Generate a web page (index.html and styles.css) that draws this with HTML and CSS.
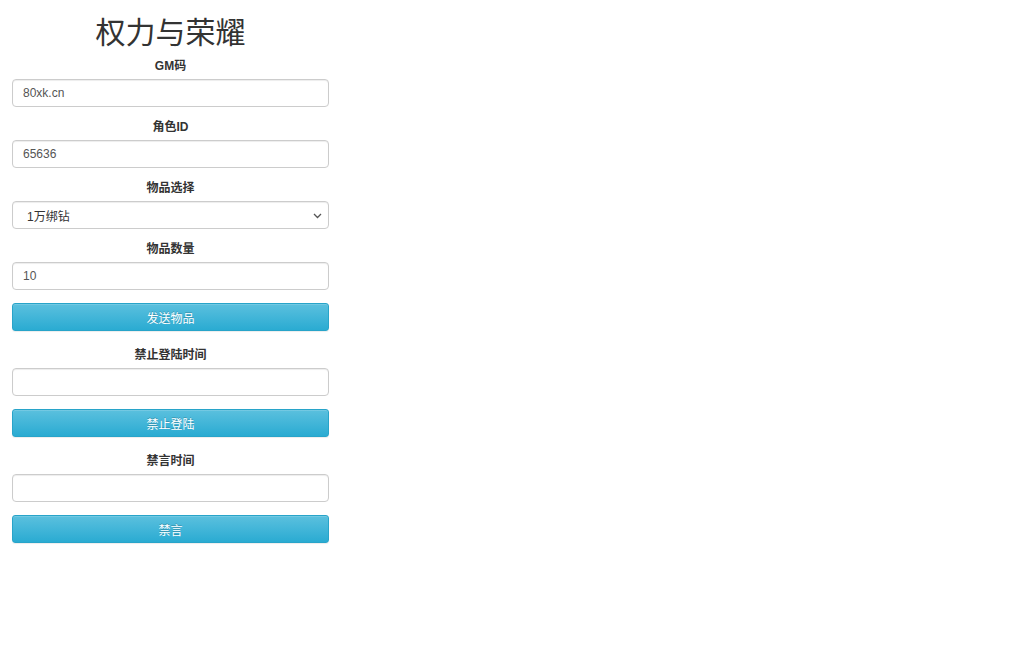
FILE: index.html
```html
<!DOCTYPE html>
<html lang="zh-CN">
<head>
<meta charset="utf-8">
<title>权力与荣耀</title>
<link rel="stylesheet" href="styles.css">
</head>
<body>
<main class="panel">
  <h1 class="title">权力与荣耀</h1>
  <div class="field">
    <label class="label">GM码</label>
    <input class="control" type="text" value="80xk.cn">
  </div>
  <div class="field">
    <label class="label">角色ID</label>
    <input class="control" type="text" value="65636">
  </div>
  <div class="field">
    <label class="label">物品选择</label>
    <div class="select-wrap">
      <div class="control select">1万绑钻</div>
      <svg class="chev" width="9" height="6" viewBox="0 0 9 6"><path d="M1 1l3.5 3.5L8 1" fill="none" stroke="#555" stroke-width="1.3"/></svg>
    </div>
  </div>
  <div class="field field-last">
    <label class="label">物品数量</label>
    <input class="control" type="text" value="10">
  </div>
  <button class="btn" type="button">发送物品</button>

  <div class="field field-last">
    <label class="label">禁止登陆时间</label>
    <input class="control" type="text" value="">
  </div>
  <button class="btn" type="button">禁止登陆</button>

  <div class="field field-last">
    <label class="label">禁言时间</label>
    <input class="control" type="text" value="">
  </div>
  <button class="btn" type="button">禁言</button>
</main>
</body>
</html>
```
FILE: styles.css
```css
html, body {
  margin: 0;
  padding: 0;
  background: #fff;
}
body {
  font-family: "Liberation Sans", Arial, "Noto Sans CJK SC", sans-serif;
  font-size: 12px;
  color: #333;
}
.panel {
  width: 317px;
  padding: 0 12px;
  display: flex;
  flex-direction: column;
}
.title {
  margin: 16px 0 9px;
  font-size: 30px;
  font-weight: normal;
  line-height: 33px;
  text-align: center;
  color: #333;
}
.field {
  display: flex;
  flex-direction: column;
  margin-bottom: 12px;
}
.field-last {
  margin-bottom: 13px;
}
.label {
  display: block;
  text-align: center;
  font-weight: bold;
  font-size: 12px;
  line-height: 17px;
  margin-bottom: 4px;
  color: #333;
}
.control {
  box-sizing: border-box;
  width: 100%;
  height: 28px;
  margin: 0;
  padding: 0 10px;
  border: 1px solid #ccc;
  border-radius: 4px;
  background: #fff;
  box-shadow: inset 0 1px 1px rgba(0,0,0,.075);
  font-family: "Liberation Sans", Arial, "Noto Sans CJK SC", sans-serif;
  font-size: 12px;
  color: #555;
  outline: none;
}
.select-wrap {
  position: relative;
}
.select {
  display: flex;
  align-items: center;
  padding-left: 14px;
  color: #333;
}
.chev {
  position: absolute;
  right: 7px;
  top: 12px;
}
.btn {
  box-sizing: border-box;
  width: 100%;
  height: 28px;
  margin: 0 0 16px;
  padding: 0;
  border: 1px solid #28a4c9;
  border-radius: 3px;
  background: linear-gradient(to bottom, #5bc0de 0%, #2aabd2 100%);
  box-shadow: inset 0 1px 0 rgba(255,255,255,.15), 0 1px 1px rgba(0,0,0,.075);
  color: #fff;
  font-family: "Liberation Sans", Arial, "Noto Sans CJK SC", sans-serif;
  font-size: 12px;
  text-shadow: 0 -1px 0 rgba(0,0,0,.2);
}
```
